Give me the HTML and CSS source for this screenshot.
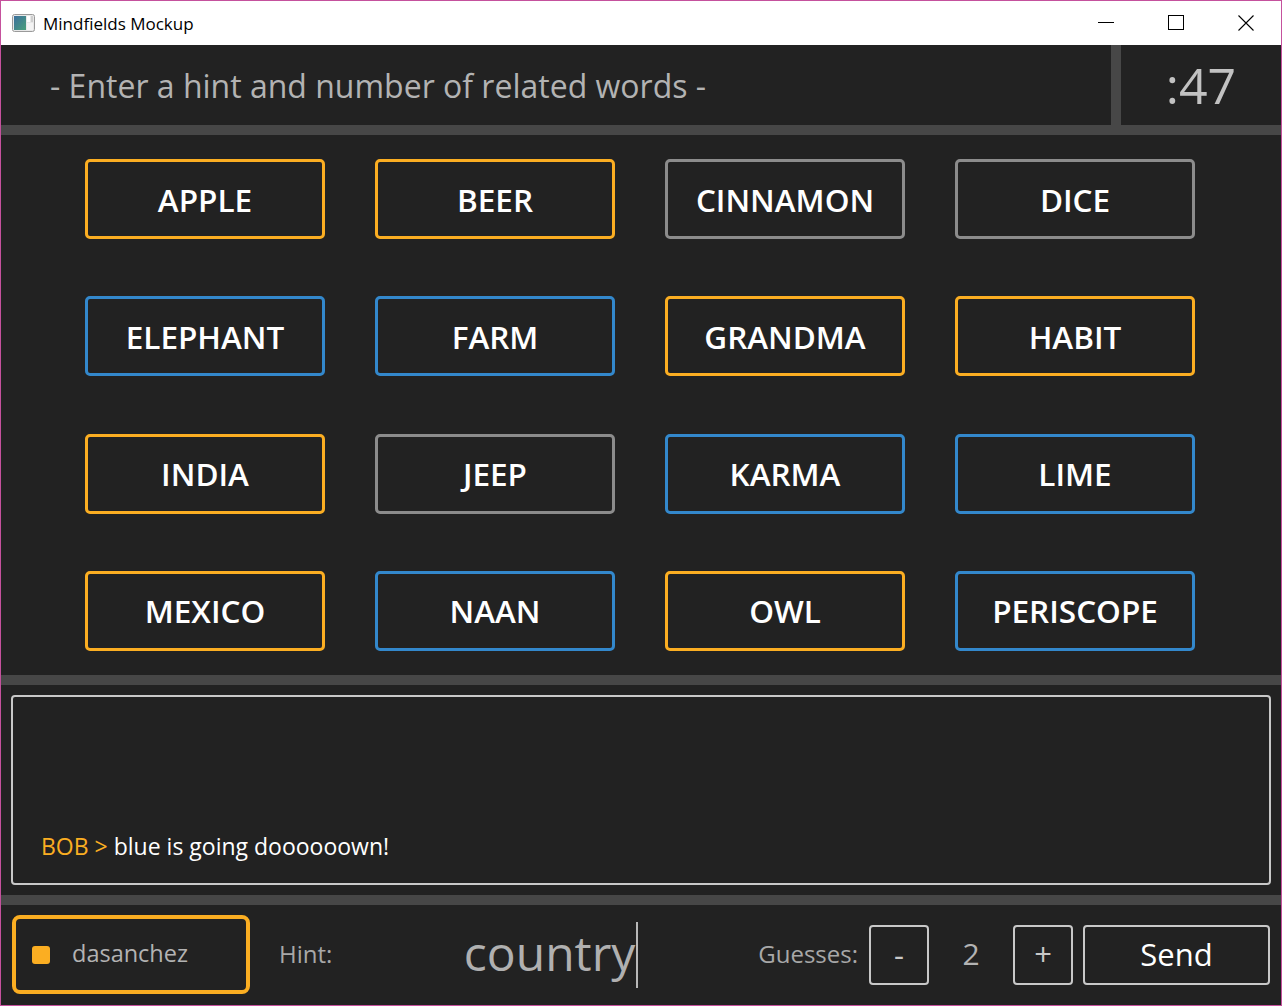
FILE: index.html
```html
<!DOCTYPE html>
<html>
<head>
<meta charset="utf-8">
<title>Mindfields Mockup</title>
<link rel="stylesheet" href="styles.css">
</head>
<body>
<div class="window">
  <div class="titlebar">
    <svg class="app-icon" width="23" height="18" viewBox="0 0 23 18">
      <rect x="0.5" y="0.5" width="22" height="17" rx="2" fill="#e8e8e8" stroke="#9a9a9a"/>
      <defs>
        <linearGradient id="g" x1="0" y1="0" x2="1" y2="1">
          <stop offset="0" stop-color="#3b6f9e"/>
          <stop offset="1" stop-color="#4aa07a"/>
        </linearGradient>
      </defs>
      <rect x="2" y="2" width="12" height="14" fill="url(#g)"/>
      <rect x="15" y="2" width="3" height="6" fill="#ffffff"/>
      <rect x="19" y="2" width="2" height="6" fill="#cfcfcf"/>
      <rect x="15" y="9" width="6" height="7" fill="#f4f4f4"/>
    </svg>
    <span class="title">Mindfields Mockup</span>
    <div class="controls">
      <svg class="ctl" width="46" height="30" viewBox="0 0 46 30"><line x1="15" y1="15.5" x2="31" y2="15.5" stroke="#000" stroke-width="1"/></svg>
      <svg class="ctl" width="46" height="30" viewBox="0 0 46 30"><rect x="15.5" y="8.5" width="15" height="14" fill="none" stroke="#000" stroke-width="1"/></svg>
      <svg class="ctl" width="46" height="30" viewBox="0 0 46 30"><path d="M15.5 8.5 L30.5 23.5 M30.5 8.5 L15.5 23.5" stroke="#000" stroke-width="1.1"/></svg>
    </div>
  </div>

  <div class="header">
    <div class="prompt">- Enter a hint and number of related words -</div>
    <div class="vsep"></div>
    <div class="timer">:47</div>
  </div>
  <div class="hsep"></div>

  <div class="board">
    <div class="card orange">APPLE</div>
    <div class="card orange">BEER</div>
    <div class="card gray">CINNAMON</div>
    <div class="card gray">DICE</div>
    <div class="card blue">ELEPHANT</div>
    <div class="card blue">FARM</div>
    <div class="card orange">GRANDMA</div>
    <div class="card orange">HABIT</div>
    <div class="card orange">INDIA</div>
    <div class="card gray">JEEP</div>
    <div class="card blue">KARMA</div>
    <div class="card blue">LIME</div>
    <div class="card orange">MEXICO</div>
    <div class="card blue">NAAN</div>
    <div class="card orange">OWL</div>
    <div class="card blue">PERISCOPE</div>
  </div>
  <div class="hsep"></div>

  <div class="chat-area">
    <div class="chat">
      <div class="msg"><span class="who">BOB &gt;</span> blue is going doooooown!</div>
    </div>
  </div>
  <div class="hsep"></div>

  <div class="bottom">
    <div class="user">
      <span class="dot"></span>
      <span class="uname">dasanchez</span>
    </div>
    <span class="label hint-label">Hint:</span>
    <div class="hint-field"><span class="hint-text">country</span><span class="caret"></span></div>
    <span class="label guesses-label">Guesses:</span>
    <div class="btn sq">-</div>
    <div class="count">2</div>
    <div class="btn sq">+</div>
    <div class="btn send">Send</div>
  </div>
</div>
</body>
</html>
```

FILE: styles.css
```css
* { box-sizing: border-box; }
html, body { margin: 0; padding: 0; }
body {
  width: 1282px;
  height: 1006px;
  font-family: "Open Sans", "Noto Sans", sans-serif;
  background: #222222;
  overflow: hidden;
}
.window {
  width: 1282px;
  height: 1006px;
  border: 1px solid #c5519d;
  display: flex;
  flex-direction: column;
  background: #222222;
}
.titlebar {
  height: 44px;
  flex: none;
  background: #ffffff;
  display: flex;
  align-items: center;
  padding-left: 11px;
}
.app-icon { display: block; margin-top: -1px; }
.title {
  margin-left: 8px;
  font-family: "Open Sans", sans-serif;
  font-size: 17px;
  color: #000;
}
.controls {
  margin-left: auto;
  display: flex;
  align-items: center;
  gap: 24px;
  margin-right: 12px;
  margin-top: -2px;
}
.ctl { display: block; }

.header {
  height: 80px;
  flex: none;
  display: flex;
}
.prompt {
  flex: 1;
  display: flex;
  align-items: center;
  padding-left: 49px;
  font-size: 32px;
  color: #b3b3b3;
}
.vsep { width: 10px; background: #474747; flex: none; }
.timer {
  width: 160px;
  flex: none;
  display: flex;
  align-items: center;
  justify-content: center;
  font-size: 50px;
  color: #c2c2c2;
}
.hsep { height: 10px; background: #474747; flex: none; }

.board {
  height: 540px;
  flex: none;
  padding: 24px 0;
  display: grid;
  grid-template-columns: repeat(4, 240px);
  grid-template-rows: repeat(4, 80px);
  column-gap: 50px;
  justify-content: center;
  align-content: space-between;
  margin-left: -2px;
}
.card {
  border: 3px solid;
  border-radius: 5px;
  display: flex;
  align-items: center;
  justify-content: center;
  color: #ffffff;
  font-size: 31.5px;
  font-weight: 600;
  padding-bottom: 0;
}
.card.orange { border-color: #fbae22; }
.card.blue { border-color: #3388cc; }
.card.gray { border-color: #8c8c8c; }

.chat-area {
  height: 210px;
  flex: none;
  padding: 10px;
}
.chat {
  height: 100%;
  border: 2px solid #c8c8c8;
  border-radius: 4px;
  display: flex;
  flex-direction: column;
  justify-content: flex-end;
  padding: 0 28px 21px;
}
.msg {
  font-size: 23px;
  color: #ffffff;
}
.who { color: #fbae22; }

.bottom {
  height: 100px;
  flex: none;
  display: flex;
  align-items: center;
  padding: 0 11px 0 11px;
}
.user {
  width: 238px;
  height: 79px;
  border: 4px solid #fbae22;
  border-radius: 8px;
  display: flex;
  align-items: center;
  padding-left: 16px;
  margin-top: -1px;
}
.dot {
  width: 18px;
  height: 18px;
  border-radius: 3px;
  background: #fbae22;
  flex: none;
}
.uname {
  margin-left: 22px;
  font-size: 23.5px;
  color: #b3b3b3;
  padding-bottom: 3px;
}
.label {
  font-size: 24px;
  color: #a8a8a8;
  padding-bottom: 3px;
}
.hint-label { margin-left: 29px; }
.hint-field {
  width: 306px;
  display: flex;
  justify-content: flex-end;
  align-items: center;
  height: 66px;
}
.hint-text {
  font-size: 48px;
  color: #b0b0b0;
  padding-bottom: 6px;
}
.caret {
  width: 2px;
  height: 66px;
  background: #b8b8b8;
  margin-left: 1px;
}
.guesses-label { margin-left: auto; margin-right: 11px; }
.btn {
  height: 60px;
  border: 2px solid #c8c8c8;
  border-radius: 4px;
  display: flex;
  align-items: center;
  justify-content: center;
  color: #e0e0e0;
  font-size: 31px;
  padding-bottom: 2px;
}
.btn.sq { width: 60px; color: #c8c8c8; }
.count {
  width: 84px;
  text-align: center;
  font-size: 30px;
  color: #b3b3b3;
  padding-bottom: 3px;
}
.btn.send {
  width: 187px;
  margin-left: 10px;
  color: #ffffff;
}
```
